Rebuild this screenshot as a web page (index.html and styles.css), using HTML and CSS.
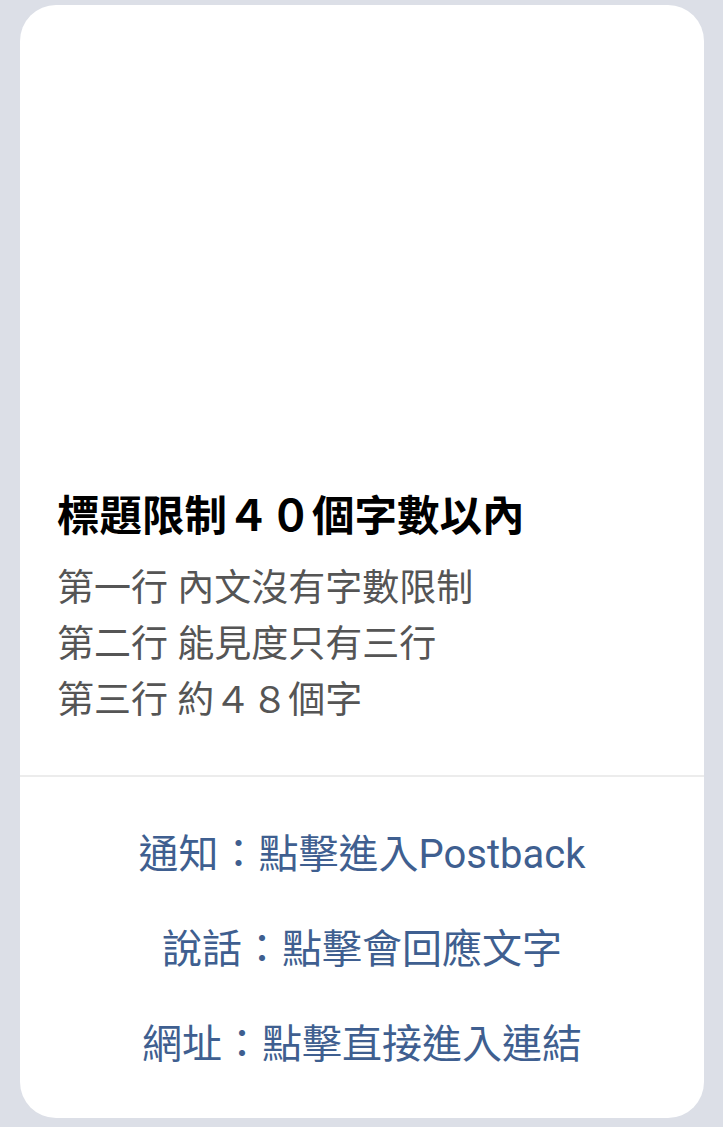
FILE: index.html
```html
<!DOCTYPE html>
<html lang="zh-Hant">
<head>
<meta charset="utf-8">
<link rel="stylesheet" href="styles.css">
</head>
<body>
<div class="card">
  <div class="hero"></div>
  <div class="content">
    <div class="title">標題限制４０個字數以內</div>
    <div class="text">
      <div class="line">第一行 內文沒有字數限制</div>
      <div class="line">第二行 能見度只有三行</div>
      <div class="line">第三行 約４８個字</div>
    </div>
  </div>
  <div class="actions">
    <div class="action">通知：點擊進入Postback</div>
    <div class="action">說話：點擊會回應文字</div>
    <div class="action">網址：點擊直接進入連結</div>
  </div>
</div>
</body>
</html>
```
FILE: styles.css
```css
html, body {
  margin: 0;
  padding: 0;
  background: #dcdfe7;
}
body {
  padding: 5px 19px 9px 20px;
  font-family: Roboto, "Noto Sans CJK TC", "Noto Sans", sans-serif;
}
.card {
  background: #ffffff;
  border-radius: 36px;
  overflow: hidden;
  width: 684px;
  display: flex;
  flex-direction: column;
}
.hero {
  height: 487px;
}
.content {
  padding: 0 37px 46px 37px;
}
.title {
  font-size: 42.5px;
  font-weight: 700;
  line-height: 50px;
  color: #000000;
}
.text {
  margin-top: 19px;
  color: #555555;
  font-size: 37px;
  line-height: 56px;
}
.actions {
  border-top: 2px solid #ececec;
  padding: 26px 0 30px;
  display: flex;
  flex-direction: column;
}
.action {
  height: 95px;
  display: flex;
  align-items: center;
  justify-content: center;
  font-size: 40px;
  color: #3f5f90;
}
```
